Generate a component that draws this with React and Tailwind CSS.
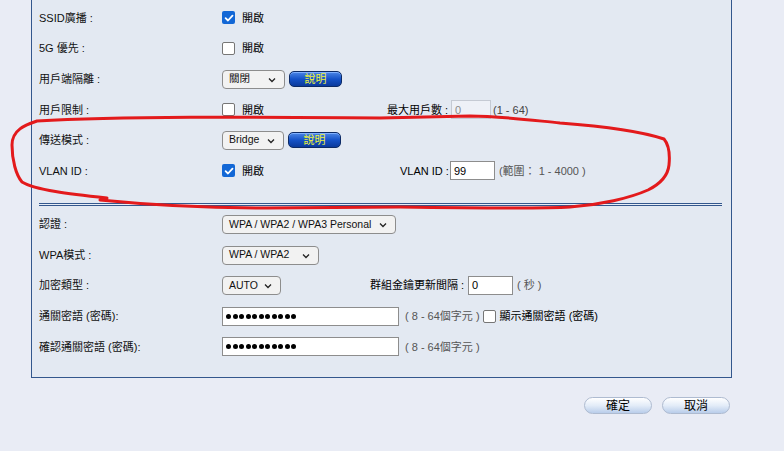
import React from "react";

const FONT = { fontFamily: '"Liberation Sans", "Noto Sans CJK TC", sans-serif' };

function Check({ on }) {
  return on ? (
    <span className="inline-flex h-[13px] w-[13px] items-center justify-center rounded-[2px] bg-[#1267d6]">
      <svg width="10" height="10" viewBox="0 0 10 10">
        <path d="M1.6 5.2 L4 7.5 L8.5 2.6" fill="none" stroke="#fff" strokeWidth="1.8" strokeLinecap="round" strokeLinejoin="round" />
      </svg>
    </span>
  ) : (
    <span className="inline-block h-[13px] w-[13px] rounded-[2px] border border-[#767676] bg-white" />
  );
}

function Sel({ w, text }) {
  return (
    <div className={`relative flex h-[19px] items-center rounded-[4px] border border-[#8d8d8d] bg-[#f2f2f2] pl-[6px] text-[10.5px] text-[#111] ${w}`}>
      <span>{text}</span>
      <svg className="absolute right-[8px] top-[6px]" width="8" height="6" viewBox="0 0 8 6">
        <path d="M1 1.5 L4 4.5 L7 1.5" fill="none" stroke="#222" strokeWidth="1.3" />
      </svg>
    </div>
  );
}

function Help() {
  return (
    <div className="ml-[4px] flex h-[16px] w-[53px] items-center justify-center rounded-[5px] border border-[#0c2a66] bg-gradient-to-b from-[#4c86e6] via-[#1552c8] to-[#0b3a9c] text-[11px] leading-none text-[#eef23a] shadow-[inset_0_1px_0_#7fb0ff]">
      說明
    </div>
  );
}

function Dots() {
  return (
    <div className="flex h-[19px] w-[177px] items-center gap-[1.5px] border border-[#8d8d8d] bg-white pl-[3px]">
      {Array.from({ length: 11 }).map((_, i) => (
        <span key={i} className="h-[5px] w-[5px] rounded-full bg-black" />
      ))}
    </div>
  );
}

function Row({ label, children }) {
  return (
    <div className="flex h-[30.6px] items-center">
      <div className="w-[183px] shrink-0 text-[#111]">{label}</div>
      <div className="flex items-center">{children}</div>
    </div>
  );
}

function Pill({ text }) {
  return (
    <div className="flex h-[17px] w-[68px] items-center justify-center rounded-full border border-[#aebbd0] bg-gradient-to-b from-[#ffffff] via-[#e3ecf8] to-[#b9cdea] text-[12px] text-black">
      {text}
    </div>
  );
}

export default function App() {
  return (
    <div className="relative h-[451px] w-[784px] overflow-hidden whitespace-nowrap bg-[#e9ecf5] text-[11px]" style={FONT}>
      <div className="ml-[31px] w-[701px] border-x border-b border-[#33578d] bg-[#e3e9f2] pb-[15px] pl-[7px] pt-[2.7px]">
        <Row label="SSID廣播 :">
          <Check on />
          <span className="ml-[7px]">開啟</span>
        </Row>
        <Row label="5G 優先 :">
          <Check />
          <span className="ml-[7px]">開啟</span>
        </Row>
        <Row label="用戶端隔離 :">
          <Sel w="w-[63px]" text="關閉" />
          <Help />
        </Row>
        <Row label="用戶限制 :">
          <div className="flex w-[165px] items-center">
            <Check />
            <span className="ml-[7px]">開啟</span>
          </div>
          <span className="w-[64px]">最大用戶數 :</span>
          <div className="flex h-[19px] w-[40px] items-center border border-[#c5cad3] bg-[#eef1f7] pl-[3px] text-[#8a8a8a]">0</div>
          <span className="ml-[2px] text-[#444]">(1 - 64)</span>
        </Row>
        <Row label="傳送模式 :">
          <Sel w="w-[62px]" text="Bridge" />
          <Help />
        </Row>
        <Row label="VLAN ID :">
          <div className="flex w-[178px] items-center">
            <Check on />
            <span className="ml-[7px]">開啟</span>
          </div>
          <span>VLAN ID :</span>
          <div className="ml-[1px] flex h-[19px] w-[45px] items-center border border-[#8d8d8d] bg-white pl-[3px] text-black">99</div>
          <span className="ml-[4px] text-[#555]">(範圍： 1 - 4000 )</span>
        </Row>
        <div className="flex h-[23px] items-start pt-[16.4px]">
          <div className="h-[3px] w-[683px] border-y border-[#33578d] bg-[#e8eef6]" />
        </div>
        <Row label="認證 :">
          <Sel w="w-[174px]" text="WPA / WPA2 / WPA3 Personal" />
        </Row>
        <Row label="WPA模式 :">
          <Sel w="w-[97px]" text="WPA / WPA2" />
        </Row>
        <Row label="加密類型 :">
          <div className="flex w-[148px] items-center">
            <Sel w="w-[59px]" text="AUTO" />
          </div>
          <span className="w-[98px]">群組金鑰更新間隔 :</span>
          <div className="flex h-[19px] w-[45px] items-center border border-[#8d8d8d] bg-white pl-[3px] text-black">0</div>
          <span className="ml-[4px] text-[#555]">( 秒 )</span>
        </Row>
        <Row label="通關密語 (密碼):">
          <Dots />
          <span className="ml-[6px] text-[#555]">( 8 - 64個字元 )</span>
          <span className="ml-[3px] flex items-center">
            <Check />
          </span>
          <span className="ml-[4px]">顯示通關密語 (密碼)</span>
        </Row>
        <Row label="確認通關密語 (密碼):">
          <Dots />
          <span className="ml-[6px] text-[#555]">( 8 - 64個字元 )</span>
        </Row>
      </div>
      <div className="mr-[54px] mt-[19px] flex justify-end gap-[10px]">
        <Pill text="確定" />
        <Pill text="取消" />
      </div>
      <svg className="pointer-events-none absolute left-0 top-0" width="784" height="451" viewBox="0 0 784 451">
        <path
          d="M 100 200 C 150 205, 200 208, 267 208 L 400 207 C 470 208, 540 209, 570 207 C 600 205, 630 198, 648 190 C 662 183, 668 175, 669 165 C 670 155, 669 145, 664 139 C 640 131, 600 126, 560 123 C 530 120, 500 116, 470 116 L 380 118 C 250 117, 120 116, 37 121 C 25 125, 12 130, 12 145 C 12 160, 16 175, 22 182 C 35 190, 70 194, 107 198"
          fill="none"
          stroke="#e31a1c"
          strokeWidth="3"
          strokeLinecap="round"
          strokeLinejoin="round"
        />
      </svg>
    </div>
  );
}
